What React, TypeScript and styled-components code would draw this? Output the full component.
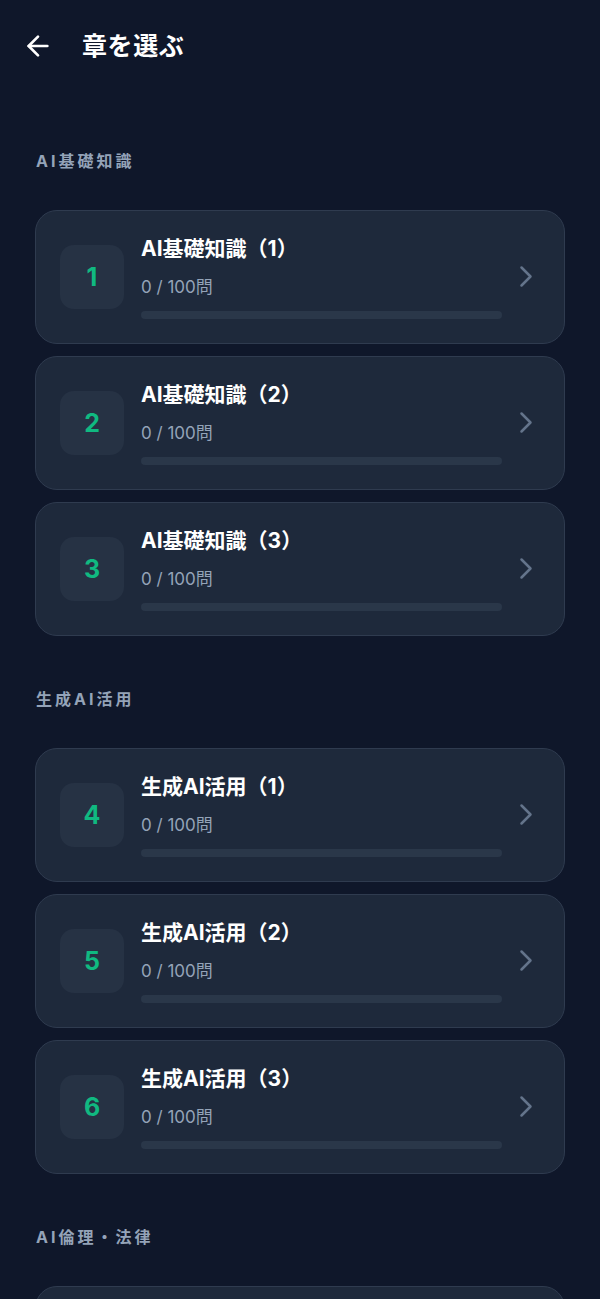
import styled, { createGlobalStyle } from 'styled-components';

type Chapter = { id: number; title: string; done: number; total: number };
type Section = { name: string; chapters: Chapter[] };

const sections: Section[] = [
    {
        name: 'AI基礎知識',
        chapters: [
            { id: 1, title: 'AI基礎知識（1）', done: 0, total: 100 },
            { id: 2, title: 'AI基礎知識（2）', done: 0, total: 100 },
            { id: 3, title: 'AI基礎知識（3）', done: 0, total: 100 },
        ],
    },
    {
        name: '生成AI活用',
        chapters: [
            { id: 4, title: '生成AI活用（1）', done: 0, total: 100 },
            { id: 5, title: '生成AI活用（2）', done: 0, total: 100 },
            { id: 6, title: '生成AI活用（3）', done: 0, total: 100 },
        ],
    },
    {
        name: 'AI倫理・法律',
        chapters: [
            { id: 7, title: 'AI倫理・法律（1）', done: 0, total: 100 },
            { id: 8, title: 'AI倫理・法律（2）', done: 0, total: 100 },
        ],
    },
];

export default function App() {
    return (
        <>
            <GlobalStyle />
            <Page>
                <Header>
                    <BackButton aria-label="戻る">
                        <svg width="32" height="32" viewBox="0 0 24 24" fill="none" stroke="currentColor" strokeWidth="2" strokeLinecap="round" strokeLinejoin="round">
                            <path d="m12 19-7-7 7-7" />
                            <path d="M19 12H5" />
                        </svg>
                    </BackButton>
                    <Title>章を選ぶ</Title>
                </Header>

                <Main>
                    {sections.map((section) => (
                        <SectionBlock key={section.name}>
                            <SectionLabel>{section.name}</SectionLabel>
                            <CardList>
                                {section.chapters.map((ch) => (
                                    <Card key={ch.id}>
                                        <NumberBox>{ch.id}</NumberBox>
                                        <Info>
                                            <ChapterTitle>{ch.title}</ChapterTitle>
                                            <Count>{ch.done} / {ch.total}問</Count>
                                            <Track>
                                                <Fill style={{ width: `${(ch.done / ch.total) * 100}%` }} />
                                            </Track>
                                        </Info>
                                        <Chevron width="14" height="24" viewBox="0 0 14 24" fill="none">
                                            <polyline points="2.5,2.5 11.5,11.5 2.5,20.5" stroke="currentColor" strokeWidth="2.5" strokeLinecap="round" strokeLinejoin="round" />
                                        </Chevron>
                                    </Card>
                                ))}
                            </CardList>
                        </SectionBlock>
                    ))}
                </Main>
            </Page>
        </>
    );
}

const GlobalStyle = createGlobalStyle`
    * { box-sizing: border-box; }
    body {
        margin: 0;
        background: #0f172a;
        font-family: Inter, "Noto Sans CJK JP", "Noto Sans", sans-serif;
        color: #ffffff;
    }
`;

const Page = styled.div`
    min-height: 100vh;
    background: #0f172a;
`;

const Header = styled.header`
    height: 92px;
    display: flex;
    align-items: center;
    padding: 0 22px;
    gap: 28px;
`;

const BackButton = styled.button`
    width: 32px;
    height: 32px;
    padding: 0;
    border: none;
    background: transparent;
    color: #ffffff;
    display: flex;
    align-items: center;
    justify-content: center;
`;

const Title = styled.h1`
    margin: 0;
    font-size: 25px;
    line-height: 32px;
    font-weight: 700;
    letter-spacing: 0.6px;
`;

const Main = styled.main`
    padding: 57px 35px 40px 35px;
    display: flex;
    flex-direction: column;
    gap: 51px;
`;

const SectionBlock = styled.section`
    display: flex;
    flex-direction: column;
    gap: 37px;
`;

const SectionLabel = styled.h2`
    margin: 0;
    padding-left: 1px;
    font-size: 16px;
    line-height: 24px;
    font-weight: 700;
    letter-spacing: 3px;
    color: #94a3b8;
`;

const CardList = styled.div`
    display: flex;
    flex-direction: column;
    gap: 12px;
`;

const Card = styled.div`
    display: flex;
    align-items: center;
    gap: 17px;
    padding: 24px 24px;
    background: #1e293b;
    border: 1px solid #2f3b4f;
    border-radius: 22px;
`;

const NumberBox = styled.div`
    flex: none;
    width: 64px;
    height: 64px;
    border-radius: 14px;
    background: #263244;
    display: flex;
    align-items: center;
    justify-content: center;
    color: #10b981;
    font-size: 25px;
    font-weight: 700;
`;

const Info = styled.div`
    flex: 1;
    min-width: 0;
    display: flex;
    flex-direction: column;
`;

const ChapterTitle = styled.div`
    font-size: 21px;
    line-height: 28px;
    font-weight: 700;
    color: #ffffff;
`;

const Count = styled.div`
    margin-top: 12px;
    font-size: 17px;
    line-height: 24px;
    color: #94a3b8;
`;

const Track = styled.div`
    margin-top: 12px;
    height: 8px;
    border-radius: 4px;
    background: #2a3749;
    overflow: hidden;
`;

const Fill = styled.div`
    height: 100%;
    background: #10b981;
`;

const Chevron = styled.svg`
    flex: none;
    color: #64748b;
    margin-right: 7px;
`;
